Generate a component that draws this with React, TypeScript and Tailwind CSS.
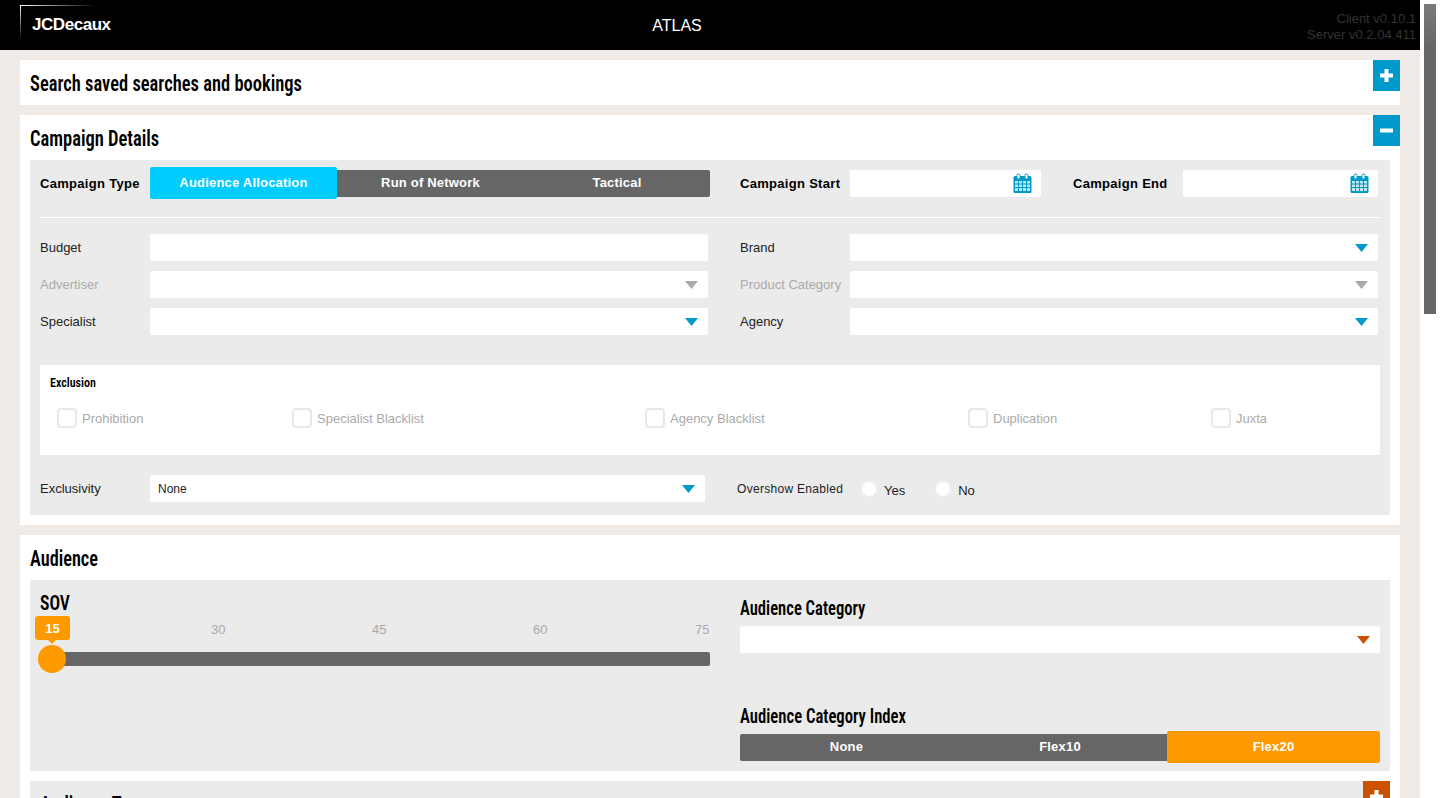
const heading = "font-['Roboto_Condensed','Roboto',sans-serif] font-stretch-[75%] font-semibold text-black origin-left whitespace-nowrap";

function CalendarIcon() {
  return (
    <svg width="19" height="21" viewBox="0 0 19 21" className="shrink-0">
      <rect x="0.5" y="3" width="18" height="17" rx="1.5" fill="#0099cc" />
      <rect x="4" y="1" width="3" height="5" rx="1.5" fill="#fff" stroke="#0099cc" />
      <rect x="12" y="1" width="3" height="5" rx="1.5" fill="#fff" stroke="#0099cc" />
      <path
        d="M2 8h3v2.500H2zM6 8h3v2.500H6zM10 8h3v2.500h-3zM14 8h3v2.500h-3zM2 11.500h3V14H2zM6 11.500h3V14H6zM10 11.500h3V14h-3zM14 11.500h3V14h-3zM2 15h3v3H2zM6 15h3v3H6zM10 15h3v3h-3zM14 15h3v3h-3z"
        fill="#bfe6f3"
      />
    </svg>
  );
}

function Caret({ color }: { color: string }) {
  return (
    <svg width="13" height="8" viewBox="0 0 13 8" className="shrink-0">
      <path d="M0 0h13L6.500 8z" fill={color} />
    </svg>
  );
}

function ToggleButton({ sign, orange }: { sign: '+' | '-'; orange?: boolean }) {
  return (
    <button
      type="button"
      className={`absolute top-0 right-0 flex items-center justify-center ${
        orange ? 'w-[27px] h-[31px] bg-[#cc5200]' : 'w-[27px] h-[31px] bg-[#0099cc]'
      }`}
    >
      <svg width="13" height="13" viewBox="0 0 13 13">
        {sign === '+' && <rect x="4.500" y="0" width="4" height="13" fill="#fff" />}
        <rect x="0" y="4.500" width="13" height="4" fill="#fff" />
      </svg>
    </button>
  );
}

function SelectField({ label, disabled }: { label: string; disabled?: boolean }) {
  return (
    <div className="flex items-center h-[27px]">
      <span className={`w-[110px] shrink-0 text-[13px] whitespace-nowrap ${disabled ? 'text-[#aaaaaa]' : 'text-[#222222]'}`}>{label}</span>
      <div className="flex-1 h-[27px] bg-white rounded-[2px] flex items-center justify-end pr-[10px]">
        <Caret color={disabled ? '#aaaaaa' : '#0099cc'} />
      </div>
    </div>
  );
}

function ExclusionCheck({ label, width }: { label: string; width: string }) {
  return (
    <label className={`flex items-center gap-[5px] ${width}`}>
      <span className="w-5 h-5 rounded-[4px] border-2 border-[#e8e8e8] bg-white shrink-0" />
      <span className="text-[13px] text-[#aaaaaa] pt-px">{label}</span>
    </label>
  );
}

function Radio({ label }: { label: string }) {
  return (
    <span className="flex items-center gap-[6px]">
      <span className="w-[18px] h-[18px] rounded-full bg-white border-2 border-[#eeeeee]" />
      <span className="text-[13px] text-[#222222] pt-1">{label}</span>
    </span>
  );
}

export default function App() {
  return (
    <div className="h-[798px] w-[1440px] overflow-hidden flex bg-white font-['Liberation_Sans',Arial,sans-serif]">
      <div className="w-[1420px] shrink-0 bg-[#f0ebe7]">
        {/* Header */}
        <header className="relative h-[50px] bg-black flex items-center justify-center">
          <div className="absolute left-5 top-[5px] w-[76px] h-[35px] pl-3 pt-[11px] text-white font-bold text-[17px] tracking-[-0.45px] leading-[18px]">
            <span className="absolute left-0 top-0 w-full h-px bg-linear-to-r from-white to-transparent" />
            <span className="absolute left-0 top-0 h-full w-px bg-linear-to-b from-white to-transparent" />
            JCDecaux
          </div>
          <span className="text-white text-base pr-[66px] pt-[2px]">ATLAS</span>
          <div className="absolute right-1 top-[11px] text-right text-[13px] leading-[16px] text-[#333333]">
            <div>Client v0.10.1</div>
            <div>Server v0.2.04.411</div>
          </div>
        </header>

        <div className="px-5 pt-[10px] flex flex-col gap-[10px]">
          {/* Search */}
          <section className="relative bg-white h-[45px] px-[10px] flex items-center">
            <h2 className={`${heading} scale-x-[0.84] text-[22px] leading-[26px] pt-[2px]`}>Search saved searches and bookings</h2>
            <ToggleButton sign="+" />
          </section>

          {/* Campaign details */}
          <section className="relative bg-white h-[410px] px-[10px] pb-[10px] flex flex-col">
            <h2 className={`${heading} scale-x-[0.84] text-[22px] leading-[26px] pt-[11px] h-[45px] shrink-0`}>Campaign Details</h2>
            <ToggleButton sign="-" />
            <div className="flex-1 bg-[#ebebeb] px-[10px] pt-[7px]">
              <div className="flex items-center h-[32px]">
                <span className="w-[110px] shrink-0 pt-px text-[13px] font-bold text-black tracking-[0.3px]">Campaign Type</span>
                <div className="w-[560px] h-[27px] flex items-center bg-[#666666] rounded-[2px] text-[13px] tracking-[0.2px] font-bold text-white">
                  <span className="w-[187px] h-[32px] bg-[#00ccff] rounded-[2px] flex items-center justify-center">Audience Allocation</span>
                  <span className="w-[187px] text-center">Run of Network</span>
                  <span className="w-[186px] text-center">Tactical</span>
                </div>
                <span className="ml-[30px] w-[110px] shrink-0 pt-px text-[13px] font-bold text-black tracking-[0.3px]">Campaign Start</span>
                <div className="w-[191px] h-[27px] bg-white rounded-[2px] flex items-center justify-end pr-[9px]">
                  <CalendarIcon />
                </div>
                <span className="ml-[32px] w-[110px] shrink-0 pt-px text-[13px] font-bold text-black tracking-[0.3px]">Campaign End</span>
                <div className="w-[195px] h-[27px] bg-white rounded-[2px] flex items-center justify-end pr-[9px]">
                  <CalendarIcon />
                </div>
              </div>

              <div className="mt-[18px] h-px bg-white" />

              <div className="mt-4 grid grid-cols-[668px_638px] gap-x-8 gap-y-[10px]">
                <div className="flex items-center h-[27px]">
                  <span className="w-[110px] shrink-0 text-[13px] text-[#222222]">Budget</span>
                  <div className="flex-1 h-[27px] bg-white rounded-[2px]" />
                </div>
                <SelectField label="Brand" />
                <SelectField label="Advertiser" disabled />
                <SelectField label="Product Category" disabled />
                <SelectField label="Specialist" />
                <SelectField label="Agency" />
              </div>

              <div className="mt-[30px] h-[90px] bg-white px-[10px] pt-[11px]">
                <h3 className={`${heading} text-xs leading-[14px]`}>Exclusion</h3>
                <div className="flex mt-[18px] pl-[7px]">
                  <ExclusionCheck label="Prohibition" width="w-[235px]" />
                  <ExclusionCheck label="Specialist Blacklist" width="w-[353px]" />
                  <ExclusionCheck label="Agency Blacklist" width="w-[323px]" />
                  <ExclusionCheck label="Duplication" width="w-[243px]" />
                  <ExclusionCheck label="Juxta" width="w-[100px]" />
                </div>
              </div>

              <div className="mt-5 flex items-center h-[27px]">
                <span className="w-[110px] shrink-0 text-[13px] text-[#222222]">Exclusivity</span>
                <div className="w-[555px] h-[27px] bg-white rounded-[2px] flex items-center justify-between pl-2 pr-[10px] text-xs text-[#222222]">
                  <span className="pt-px">None</span>
                  <Caret color="#0099cc" />
                </div>
                <span className="ml-8 w-[123px] shrink-0 text-xs tracking-[0.3px] text-[#222222]">Overshow Enabled</span>
                <div className="flex gap-[29px]">
                  <Radio label="Yes" />
                  <Radio label="No" />
                </div>
              </div>
            </div>
          </section>

          {/* Audience */}
          <section className="relative bg-white px-[10px]">
            <h2 className={`${heading} scale-x-[0.83] text-[22px] leading-[26px] pt-[11px] h-[45px]`}>Audience</h2>
            <div className="h-[191px] bg-[#ebebeb] flex px-[10px]">
              <div className="w-[670px] shrink-0">
                <h3 className={`${heading} scale-x-[0.88] text-[20px] leading-6 pt-[11px] h-[36px]`}>SOV</h3>
                <div className="relative h-[50px]">
                  <div className="absolute left-[-5px] top-0 w-[35px] h-6 rounded-[3px] bg-[#ff9900] flex items-center justify-center pt-px text-[13px] font-bold text-white">
                    15
                    <span className="absolute left-[13px] top-6 w-0 h-0 border-x-[4px] border-x-transparent border-t-[4px] border-t-[#ff9900]" />
                  </div>
                  <div className="flex text-[#aaaaaa] pt-1 pl-[171px] text-[13px]">
                    <span className="w-[161px]">30</span>
                    <span className="w-[161px]">45</span>
                    <span className="w-[162px]">60</span>
                    <span>75</span>
                  </div>
                  <div className="absolute left-3 right-0 top-[36px] h-[14px] rounded-[2px] bg-[#666666]" />
                  <div className="absolute left-[-2px] top-[29px] w-7 h-7 rounded-full bg-[#ff9900]" />
                </div>
              </div>
              <div className="ml-[30px] flex-1">
                <h3 className={`${heading} scale-x-[0.83] text-[20px] leading-6 pt-4 h-[46px]`}>Audience Category</h3>
                <div className="h-[27px] bg-white rounded-[2px] flex items-center justify-end pr-[10px]">
                  <Caret color="#cc5200" />
                </div>
                <h3 className={`${heading} scale-x-[0.834] text-[20px] leading-6 mt-[51px] h-[30px]`}>Audience Category Index</h3>
                <div className="h-[27px] flex items-center bg-[#666666] rounded-[2px] text-[13px] tracking-[0.2px] font-bold text-white">
                  <span className="w-[213px] text-center pb-px">None</span>
                  <span className="w-[214px] text-center pb-px">Flex10</span>
                  <span className="w-[213px] h-[32px] mb-px pb-px bg-[#ff9900] rounded-[2px] flex items-center justify-center">Flex20</span>
                </div>
              </div>
            </div>
            <div className="mt-[10px] relative h-[60px] bg-[#ebebeb] px-[10px] pt-[11px]">
              <h3 className={`${heading} scale-x-[0.83] text-[22px] leading-[26px]`}>Audience Type</h3>
              <ToggleButton sign="+" orange />
            </div>
          </section>
        </div>
      </div>

      {/* Scrollbar */}
      <aside className="w-5 shrink-0 pt-1 pl-1">
        <div className="w-3 h-[310px] bg-linear-to-b from-[#7a7a7a] to-[#666666] to-[15%]" />
      </aside>
    </div>
  );
}
